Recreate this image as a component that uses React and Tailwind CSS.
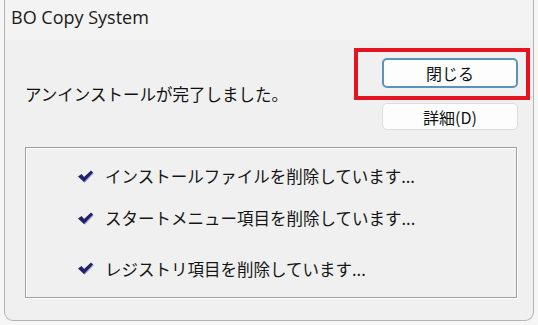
import React from 'react';

const JP = { fontFamily: '"Noto Sans CJK JP", "Noto Sans", sans-serif' };

function Check() {
  return (
    <svg width="17" height="13" viewBox="0 0 16 13" className="shrink-0">
      <path d="M0.5 6.5 L4 4 L6.5 7 L13.5 0.5 L15.5 2.5 L6.5 12 Z" fill="#a3a3cf" transform="translate(0.8 0.8)" />
      <path d="M0.5 6.5 L4 4 L6.5 7 L13.5 0.5 L15.5 2.5 L6.5 12 Z" fill="#22226c" />
    </svg>
  );
}

const steps = [
  { text: 'インストールファイルを削除しています...', mt: 'mt-[16px]' },
  { text: 'スタートメニュー項目を削除しています...', mt: 'mt-[17px]' },
  { text: 'レジストリ項目を削除しています...', mt: 'mt-[26px]' },
];

export default function App() {
  return (
    <div className="w-[538px] h-[325px] bg-[#f6f6f6] overflow-hidden">
      <div className="relative ml-[4px] w-[530px] h-[321px] bg-[#f0f0f0] border-l border-r border-b border-[#b4b4b4] rounded-bl-[9px] rounded-br-[9px]">
        {/* Titre */}
        <div
          className="h-[40px] pl-[6px] pt-[4px] text-[18px] text-[#1a1a1a] bg-[#f3f3f3]"
          style={{ fontFamily: '"Open Sans", "Noto Sans", sans-serif' }}
        >
          BO Copy System
        </div>

        {/* Message + boutons */}
        <div className="flex pl-[20px] pr-[15px] pt-[18px]">
          <div className="pt-[24px] text-[16.5px] text-[#111]" style={JP}>
            アンインストールが完了しました。
          </div>
          <div className="ml-auto w-[136px] flex flex-col gap-[15px]">
            <button
              className="h-[30px] rounded-[5px] bg-[#fdfdfd] border-2 border-[#5a94b8] text-[16px] text-[#111] leading-none"
              style={JP}
            >
              閉じる
            </button>
            <button
              className="h-[27px] rounded-[5px] bg-[#fdfdfd] border border-[#dcdcdc] text-[16px] text-[#111] leading-none"
              style={JP}
            >
              詳細(D)
            </button>
          </div>
        </div>

        {/* Cadre rouge */}
        <div className="absolute left-[349px] top-[48px] w-[176px] h-[52px] border-[4px] border-[#e3141f]" />

        {/* Groupe */}
        <div className="ml-[20px] mr-[16px] mt-[17px] h-[151px] border border-[#a0a0a0] shadow-[inset_1px_1px_0_#ffffff,1px_1px_0_#ffffff]">
          {steps.map((s, i) => (
            <div key={i} className={`flex items-center pl-[51px] ${s.mt}`}>
              <Check />
              <span className="ml-[11px] text-[16.5px] text-[#151515]" style={JP}>
                {s.text}
              </span>
            </div>
          ))}
        </div>
      </div>
    </div>
  );
}
